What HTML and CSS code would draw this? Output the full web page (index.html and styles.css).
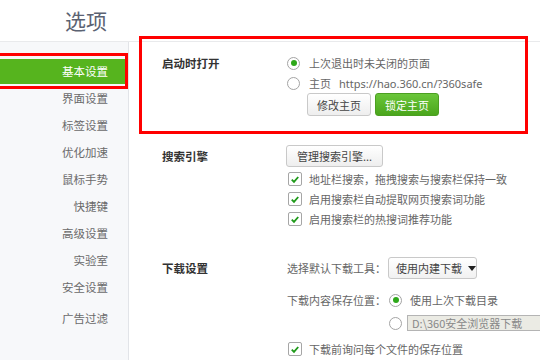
FILE: index.html
```html
<!DOCTYPE html>
<html lang="zh-CN">
<head>
<meta charset="utf-8">
<title>选项</title>
<link rel="stylesheet" href="styles.css">
</head>
<body>
<header class="header"><h1 class="title">选项</h1></header>
<div class="body">
  <nav class="sidebar">
    <div class="nav-item active">基本设置</div>
    <div class="nav-item">界面设置</div>
    <div class="nav-item">标签设置</div>
    <div class="nav-item">优化加速</div>
    <div class="nav-item">鼠标手势</div>
    <div class="nav-item">快捷键</div>
    <div class="nav-item">高级设置</div>
    <div class="nav-item">实验室</div>
    <div class="nav-item">安全设置</div>
    <div class="nav-item last">广告过滤</div>
  </nav>
  <main class="main">
    <section class="section s-startup">
      <div class="label">启动时打开</div>
      <div class="controls">
        <div class="row"><span class="radio checked"></span><span class="txt">上次退出时未关闭的页面</span></div>
        <div class="row"><span class="radio"></span><span class="txt">主页</span><span class="txt url">https://hao.360.cn/?360safe</span></div>
        <div class="btn-row"><button class="btn">修改主页</button><button class="btn green">锁定主页</button></div>
      </div>
    </section>
    <section class="section s-search">
      <div class="label label-btn">搜索引擎</div>
      <div class="controls">
        <div class="row-btn"><button class="btn wide">管理搜索引擎...</button></div>
        <div class="checks">
          <div class="row"><span class="check"><svg viewBox="0 0 13 13" width="13" height="13"><path d="M3 6.6 L5.4 9 L10 3.8" fill="none" stroke="#1f9a1a" stroke-width="2"/></svg></span><span class="txt">地址栏搜索，拖拽搜索与搜索栏保持一致</span></div>
          <div class="row"><span class="check"><svg viewBox="0 0 13 13" width="13" height="13"><path d="M3 6.6 L5.4 9 L10 3.8" fill="none" stroke="#1f9a1a" stroke-width="2"/></svg></span><span class="txt">启用搜索栏自动提取网页搜索词功能</span></div>
          <div class="row"><span class="check"><svg viewBox="0 0 13 13" width="13" height="13"><path d="M3 6.6 L5.4 9 L10 3.8" fill="none" stroke="#1f9a1a" stroke-width="2"/></svg></span><span class="txt">启用搜索栏的热搜词推荐功能</span></div>
        </div>
      </div>
    </section>
    <section class="section s-download">
      <div class="label label-btn">下载设置</div>
      <div class="controls">
        <div class="row-btn"><span class="txt plain">选择默认下载工具：</span><span class="select">使用内建下载<span class="caret"></span></span></div>
        <div class="save-grid">
          <span class="txt plain">下载内容保存位置：</span>
          <div class="row"><span class="radio checked"></span><span class="txt">使用上次下载目录</span></div>
          <span></span>
          <div class="row"><span class="radio"></span><span class="path">D:\360安全浏览器下载</span></div>
        </div>
        <div class="row last-check"><span class="check"><svg viewBox="0 0 13 13" width="13" height="13"><path d="M3 6.6 L5.4 9 L10 3.8" fill="none" stroke="#1f9a1a" stroke-width="2"/></svg></span><span class="txt">下载前询问每个文件的保存位置</span></div>
      </div>
    </section>
  </main>
</div>
<div class="mark mark-nav"></div>
<div class="mark mark-startup"></div>
</body>
</html>
```
FILE: styles.css
```css
* { box-sizing: border-box; }
html, body { margin: 0; padding: 0; }
body {
  width: 540px;
  height: 360px;
  overflow: hidden;
  position: relative;
  background: #fff;
  font-family: "Noto Sans CJK SC", "Noto Sans", sans-serif;
  color: #555;
}
.header {
  height: 42px;
  border-bottom: 1px solid #e9eaec;
  padding-left: 65px;
}
.title {
  margin: 0;
  font-size: 21px;
  font-weight: normal;
  line-height: 40px;
  color: #5b6272;
}
.body {
  display: flex;
  height: 318px;
}
.sidebar {
  width: 129px;
  flex: none;
  background: #f7f8fa;
  border-right: 1px solid #e2e4e8;
  padding-top: 17px;
  display: flex;
  flex-direction: column;
  gap: 2px;
}
.nav-item {
  height: 25px;
  line-height: 25px;
  text-align: right;
  padding-right: 20px;
  font-size: 11.5px;
  color: #6a6a6a;
}
.nav-item.active {
  background: #56b41e;
  color: #fff;
  margin-right: 3px;
  padding-right: 17px;
}
.nav-item.last { margin-top: 4px; }
.main {
  flex: 1;
  min-width: 0;
  overflow: hidden;
  padding: 11px 0 0 33px;
}
.section {
  display: grid;
  grid-template-columns: 124px max-content;
}
.label {
  font-size: 11.5px;
  font-weight: bold;
  color: #333;
  line-height: 20px;
}
.label-btn { line-height: 22px; }
.s-search { margin-top: 29px; }
.s-download { margin-top: 28px; }
.controls { display: flex; flex-direction: column; }
.row {
  display: flex;
  align-items: center;
  height: 20px;
  white-space: nowrap;
}
.row-btn {
  display: flex;
  align-items: center;
  height: 22px;
  gap: 2px;
  white-space: nowrap;
}
.txt {
  font-size: 11px;
  color: #666;
  margin-left: 9px;
  white-space: nowrap;
}
.txt.plain { margin-left: 1px; }
.txt.url { font-family: "Noto Sans", sans-serif; margin-left: 8px; }
.radio {
  width: 13px;
  height: 13px;
  border-radius: 50%;
  border: 1px solid #a4a4a4;
  background: #fff;
  flex: none;
  margin-left: 1px;
  display: flex;
  align-items: center;
  justify-content: center;
}
.radio.checked::after {
  content: "";
  width: 6px;
  height: 6px;
  border-radius: 50%;
  background: #2ea81a;
}
.check {
  width: 14px;
  height: 14px;
  border: 1px solid #a6a6a6;
  border-radius: 2px;
  background: #fff;
  flex: none;
  margin-left: 2px;
  display: flex;
  align-items: center;
  justify-content: center;
}
.check svg { display: block; }
.check + .txt { margin-left: 7px; }
.btn-row {
  display: flex;
  gap: 4px;
  margin-left: 21px;
  height: 23px;
}
.btn {
  font-family: inherit;
  font-size: 11px;
  width: 64px;
  height: 23px;
  padding: 0;
  border: 1px solid #c9c9c9;
  border-radius: 3px;
  background: linear-gradient(#ffffff, #eeeeee);
  color: #444;
}
.btn.green {
  background: linear-gradient(#6ac63a, #4ba61c);
  border-color: #4c9f22;
  color: #fff;
}
.btn.wide { width: 97px; height: 22px; }
.checks { margin-top: 2px; }
.select {
  display: inline-flex;
  align-items: center;
  width: 89px;
  height: 22px;
  border: 1px solid #c9c9c9;
  border-radius: 3px;
  background: linear-gradient(#ffffff, #f1f1f1);
  font-size: 11px;
  color: #444;
  padding-left: 7px;
  gap: 6px;
  flex: none;
}
.caret {
  width: 0;
  height: 0;
  border-left: 4px solid transparent;
  border-right: 4px solid transparent;
  border-top: 5px solid #222;
}
.save-grid {
  display: grid;
  grid-template-columns: max-content max-content;
  justify-content: start;
  align-items: center;
  row-gap: 3px;
  margin-top: 11px;
}
.save-grid .row .radio { margin-left: 3px; }
.save-grid .row .txt { margin-left: 8px; }
.path {
  margin-left: 5px;
  width: 200px;
  height: 16px;
  line-height: 14px;
  border: 1px solid #b4b4b4;
  background: #ebebe4;
  font-size: 11px;
  color: #888;
  padding-left: 4px;
  flex: none;
}
.last-check { margin-top: 6px; }
.mark {
  position: absolute;
  border: 3px solid #f00;
  pointer-events: none;
}
.mark-nav { left: -3px; top: 53px; width: 131px; height: 36px; }
.mark-startup { left: 139px; top: 36px; width: 389px; height: 98px; }
```
